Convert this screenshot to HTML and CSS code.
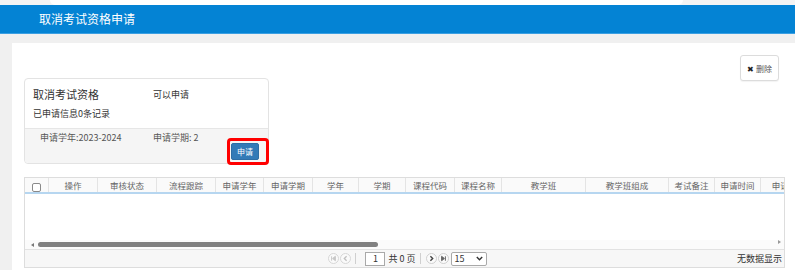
FILE: index.html
```html
<!DOCTYPE html>
<html lang="zh-CN">
<head>
    <meta charset="UTF-8">
    <meta name="viewport" content="width=device-width, initial-scale=1.0">
    <title>取消考试资格申请</title>
    <link rel="stylesheet" href="styles.css">
</head>
<body>
    <!-- 顶部标签条 -->
    <div class="top-strip"><div class="top-tab"></div></div>

    <!-- 标题栏 -->
    <div class="page-header">取消考试资格申请</div>

    <div class="page-body">
        <div class="main-panel">
            <div class="toolbar">
                <button class="btn-delete"><span class="x-icon">&#10006;</span> 删除</button>
            </div>

            <!-- 申请卡片 -->
            <div class="apply-card">
                <div class="card-head">
                    <div class="head-row">
                        <span class="card-title">取消考试资格</span>
                        <span class="card-state">可以申请</span>
                    </div>
                    <div class="card-count">已申请信息0条记录</div>
                </div>
                <div class="card-foot">
                    <div class="info-row">
                        <span class="info-year">申请学年:2023-2024</span>
                        <span>申请学期: 2</span>
                    </div>
                    <div class="btn-row">
                        <button class="btn-apply">申请</button>
                    </div>
                    <div class="mark-box"></div>
                </div>
            </div>

            <!-- 表格 -->
            <div class="grid-box">
                <div class="grid-clip">
                    <div class="grid-head">
                        <div class="cell"><span class="check"></span></div>
                        <div class="cell">操作</div>
                        <div class="cell">审核状态</div>
                        <div class="cell">流程跟踪</div>
                        <div class="cell">申请学年</div>
                        <div class="cell">申请学期</div>
                        <div class="cell">学年</div>
                        <div class="cell">学期</div>
                        <div class="cell">课程代码</div>
                        <div class="cell">课程名称</div>
                        <div class="cell">教学班</div>
                        <div class="cell">教学班组成</div>
                        <div class="cell">考试备注</div>
                        <div class="cell">申请时间</div>
                        <div class="cell">申请人</div>
                    </div>
                </div>
                <div class="grid-body"></div>
                <div class="hscroll">
                    <span class="arrow-left"></span>
                    <span class="thumb"></span>
                    <span class="arrow-right"></span>
                </div>
                <div class="pager">
                    <div></div>
                    <div class="pager-ctrl">
                        <span class="pg-btn off">
                            <svg width="11" height="11" viewBox="0 0 11 11"><circle cx="5.5" cy="5.5" r="5" fill="#fafafa" stroke="#d6d6d6"/><path d="M3.6 3.3v4.4M7.4 3.3 4.6 5.5l2.8 2.2z" fill="#c8c8c8" stroke="#c8c8c8" stroke-width="1"/></svg>
                        </span>
                        <span class="pg-btn off">
                            <svg width="11" height="11" viewBox="0 0 11 11"><circle cx="5.5" cy="5.5" r="5" fill="#fafafa" stroke="#d6d6d6"/><path d="M6.6 3.2 4.3 5.5l2.3 2.3" fill="none" stroke="#c0c0c0" stroke-width="1.3"/></svg>
                        </span>
                        <span class="pg-sep"></span>
                        <span class="pg-input">1</span>
                        <span class="pg-text">共 0 页</span>
                        <span class="pg-sep"></span>
                        <span class="pg-btn">
                            <svg width="11" height="11" viewBox="0 0 11 11"><circle cx="5.5" cy="5.5" r="5" fill="#fafafa" stroke="#cfcfcf"/><path d="M4.4 3.2 6.7 5.5 4.4 7.8" fill="none" stroke="#444" stroke-width="1.4"/></svg>
                        </span>
                        <span class="pg-btn">
                            <svg width="11" height="11" viewBox="0 0 11 11"><circle cx="5.5" cy="5.5" r="5" fill="#fafafa" stroke="#cfcfcf"/><path d="M7.4 3.3v4.4M3.6 3.3l2.8 2.2-2.8 2.2z" fill="#666" stroke="#666" stroke-width="1"/></svg>
                        </span>
                        <span class="pg-select">15
                            <svg width="7" height="5" viewBox="0 0 7 5"><path d="M.8 1 3.5 3.8 6.2 1" fill="none" stroke="#333" stroke-width="1.4"/></svg>
                        </span>
                    </div>
                    <div class="pager-info">无数据显示</div>
                </div>
            </div>
        </div>
    </div>
</body>
</html>
```

FILE: styles.css
```css
body {
    margin: 0;
    height: 270px;
    overflow: hidden;
    background-color: #f0f0f0;
    font-family: "Noto Sans CJK SC", "Liberation Sans", sans-serif;
    color: #333;
}
.top-strip {
    height: 5px;
    background-color: #f4f4f4;
    padding-left: 50px;
}
.top-tab {
    width: 633px;
    height: 5px;
    background-color: #fff;
    border-radius: 0 0 6px 6px;
}
.page-header {
    height: 28px;
    line-height: 28px;
    background-color: #0483d4;
    border-bottom: 1px solid #3b9fe2;
    color: #fff;
    font-size: 12px;
    padding-left: 39px;
}
.page-body {
    padding: 9px 0 0 12px;
}
.main-panel {
    box-sizing: border-box;
    background-color: #fff;
    height: 227px;
    padding: 12px 10px 0 12px;
}
.toolbar {
    height: 23px;
    display: flex;
    justify-content: flex-end;
    padding-right: 6px;
}
.btn-delete {
    width: 39px;
    height: 26px;
    padding: 0;
    border: 1px solid #dcdcdc;
    border-radius: 3px;
    background-color: #fff;
    box-shadow: 0 1px 1px rgba(0, 0, 0, 0.05);
    font-family: inherit;
    font-size: 8px;
    color: #555;
}
.x-icon {
    font-size: 8px;
    color: #222;
}
.apply-card {
    width: 243px;
    border: 1px solid #e3e3e3;
    border-radius: 4px;
}
.card-head {
    padding: 7px 9px 8px 8px;
}
.head-row {
    display: flex;
    align-items: center;
    height: 16px;
}
.card-title {
    width: 120px;
    font-size: 11px;
    color: #333;
}
.card-state {
    font-size: 9px;
    color: #333;
}
.card-count {
    margin-top: 6px;
    height: 12px;
    line-height: 12px;
    font-size: 9px;
}
.card-foot {
    position: relative;
    border-top: 1px solid #e6e6e6;
    background-color: #f5f5f5;
    padding: 4px 9px 3px 15px;
    border-radius: 0 0 4px 4px;
}
.info-row {
    display: flex;
    height: 10px;
    line-height: 10px;
    font-size: 9px;
    color: #555;
}
.info-year {
    width: 113px;
}
.btn-row {
    display: flex;
    justify-content: flex-end;
}
.btn-apply {
    width: 28px;
    height: 17px;
    padding: 0;
    border: 1px solid #2e6da4;
    border-radius: 2px;
    background-color: #337ab7;
    color: #fff;
    font-family: inherit;
    font-size: 8px;
}
.mark-box {
    position: absolute;
    left: 202px;
    top: 9px;
    width: 42px;
    height: 27px;
    box-sizing: border-box;
    border: 3px solid #f00;
    border-radius: 4px;
}
.grid-box {
    margin-top: 13px;
    width: 759px;
    border: 1px solid #dddddd;
}
.grid-clip {
    overflow: hidden;
}
.grid-head {
    display: grid;
    grid-template-columns: 24px 49px 59px 59px 48px 49px 46px 47px 49px 47px 84px 83px 46px 46px 48px;
    width: 784px;
    height: 14px;
    border-bottom: 2px solid #b6d6f0;
    background-color: #fafafa;
}
.cell {
    border-right: 1px solid #e4e4e4;
    font-size: 8.5px;
    line-height: 14px;
    text-align: center;
    color: #666;
    white-space: nowrap;
    overflow: hidden;
}
.check {
    display: inline-block;
    width: 7px;
    height: 7px;
    margin-top: 5px;
    border: 1px solid #8a8a8a;
    border-radius: 2px;
    background-color: #fff;
}
.grid-body {
    height: 46px;
    background-color: #fff;
}
.hscroll {
    position: relative;
    height: 9px;
    background-color: #fbfbfb;
}
.thumb {
    position: absolute;
    left: 13px;
    top: 2px;
    width: 340px;
    height: 5px;
    border-radius: 3px;
    background-color: #808080;
}
.arrow-left {
    position: absolute;
    left: 6px;
    top: 3px;
    border-top: 2px solid transparent;
    border-bottom: 2px solid transparent;
    border-right: 3px solid #777;
}
.arrow-right {
    position: absolute;
    right: 3px;
    top: 0;
    border-top: 2px solid transparent;
    border-bottom: 2px solid transparent;
    border-left: 3px solid #999;
}
.pager {
    display: grid;
    grid-template-columns: 1fr auto 1fr;
    align-items: center;
    height: 17px;
    border-top: 1px solid #e2e2e2;
    background-color: #f7f7f7;
    font-size: 9px;
}
.pager-ctrl {
    display: flex;
    align-items: center;
    gap: 1px;
    padding-left: 6px;
}
.pg-btn {
    display: flex;
    width: 11px;
    height: 11px;
}
.pg-sep {
    width: 1px;
    height: 11px;
    margin: 0 4px 0 3px;
    background-color: #cfcfcf;
}
.pg-input {
    width: 18px;
    height: 12px;
    line-height: 12px;
    margin-left: 4px;
    border: 1px solid #a9a9a9;
    background-color: #fff;
    text-align: center;
    font-size: 9px;
}
.pg-text {
    margin-left: 2px;
    color: #333;
}
.pg-select {
    display: flex;
    align-items: center;
    justify-content: space-between;
    width: 28px;
    height: 12px;
    margin-left: 1px;
    padding: 0 3px 0 3px;
    border: 1px solid #a9a9a9;
    border-radius: 2px;
    background-color: #fff;
    font-size: 9px;
}
.pager-info {
    text-align: right;
    padding-right: 2px;
    color: #333;
}
```
